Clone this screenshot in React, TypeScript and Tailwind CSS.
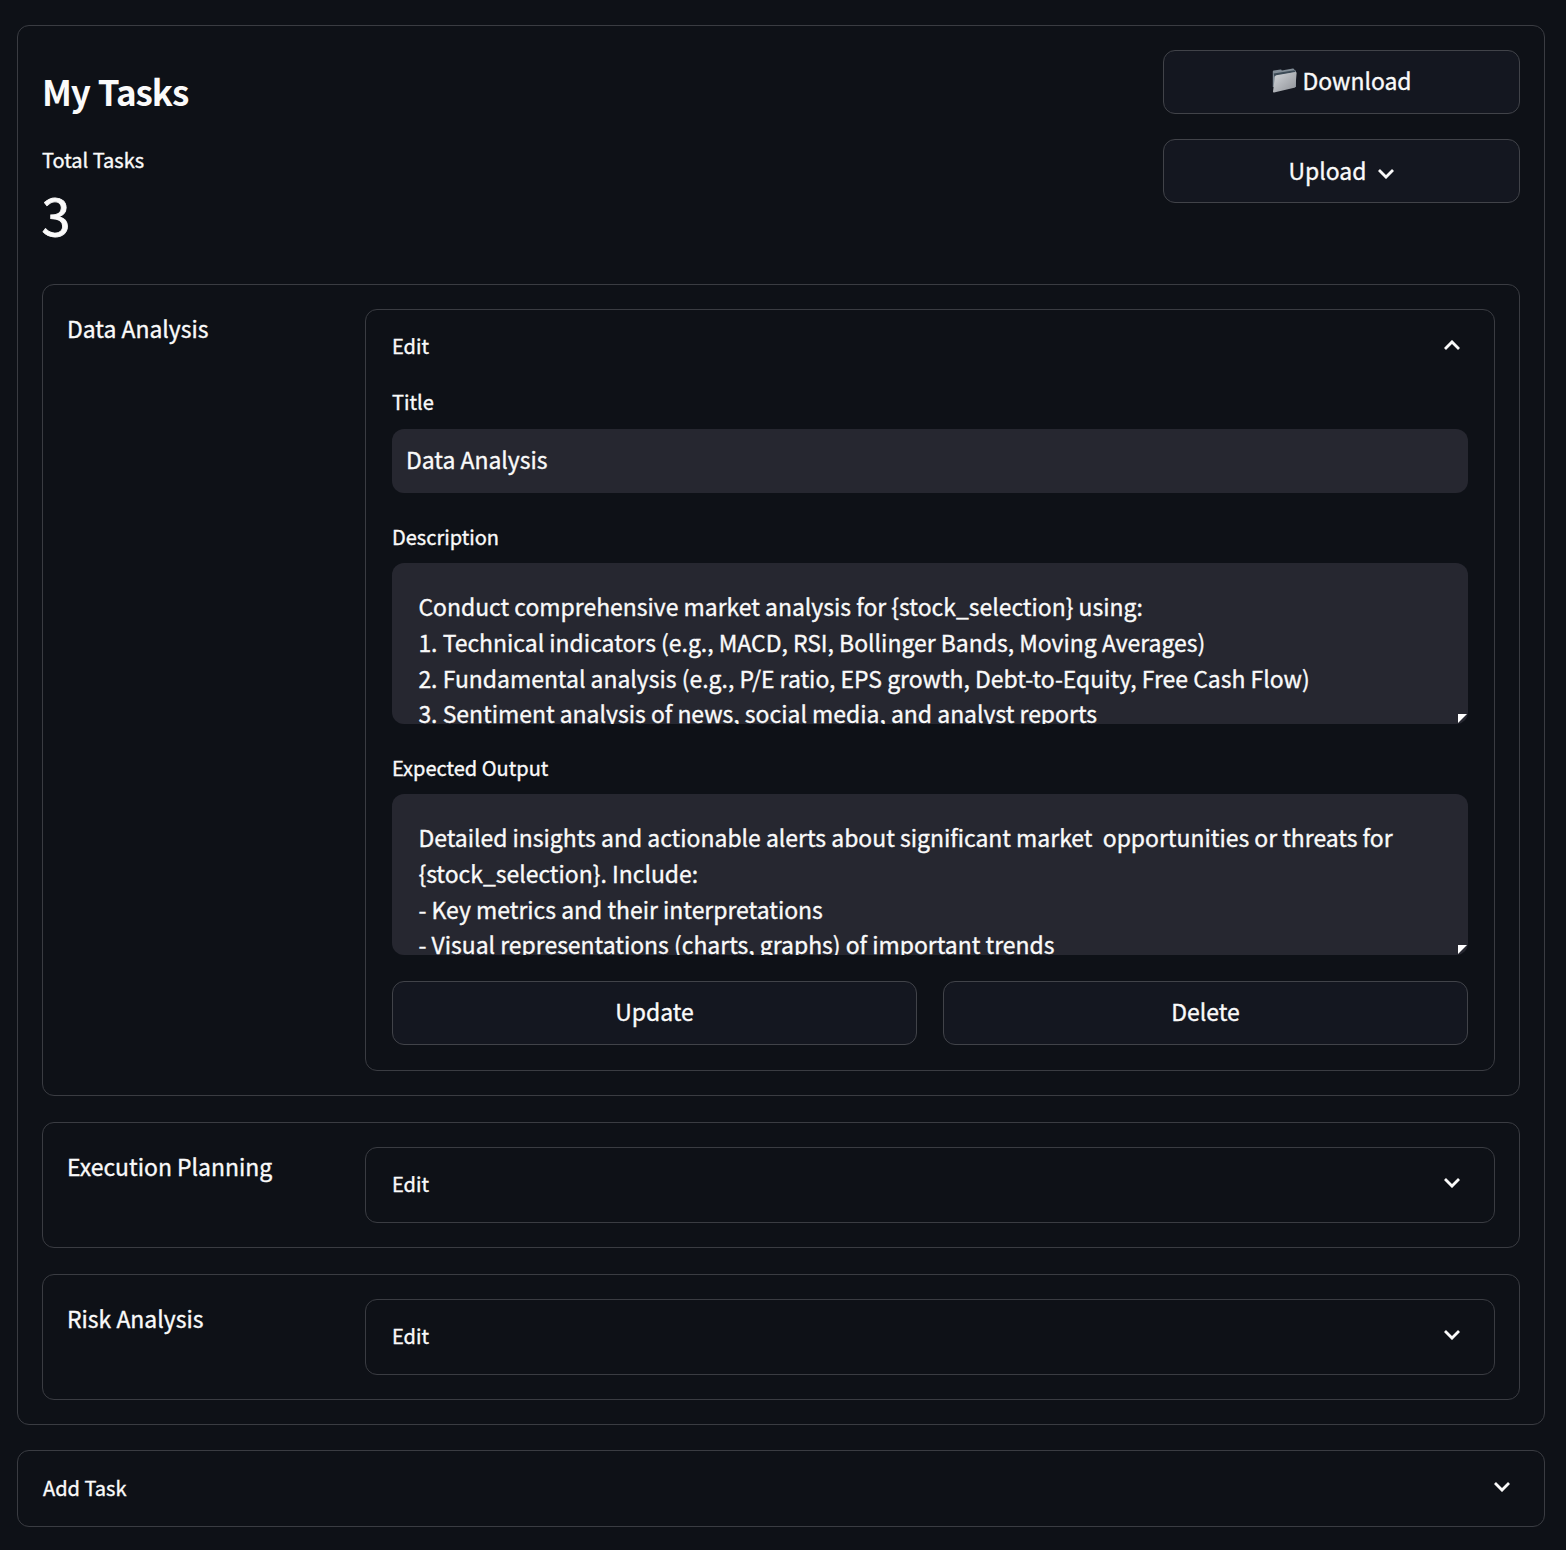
import React from "react";

const F = "font-['Noto_Sans_CJK_SC',sans-serif] [-webkit-text-stroke:0.35px_#fafafa]";
const T = "block h-[35.8px] leading-[35.8px] whitespace-pre";
const btn = "flex h-16 items-center justify-center rounded-xl border border-[#414349] bg-[#141720] text-[22.95px]";

function Chevron({ up = false, className = "" }: { up?: boolean; className?: string }) {
  return (
    <svg viewBox="0 0 16 10" className={`h-[10px] w-4 shrink-0 ${className}`} fill="none" stroke="#fafafa" strokeWidth="2.8">
      <path d={up ? "M1 8.9 8 1.9 15 8.9" : "M1 1.1 8 8.1 15 1.1"} />
    </svg>
  );
}

function Folder() {
  return (
    <svg viewBox="0 0 25 25" className="mr-[5px] ml-px h-[25px] w-[25px] shrink-0">
      <defs>
        <linearGradient id="front" x1="0" y1="0" x2="1" y2="1">
          <stop offset="0" stopColor="#d3d6da" />
          <stop offset="1" stopColor="#8d9096" />
        </linearGradient>
      </defs>
      <path d="M.8 3.6Q.8 2.8 1.8 2.6L8.6 1.5Q9.6 1.4 9.8 2.4L20.8.6Q22 .5 22.2 1.6L24 3V19H.8Z" fill="#818c96" />
      <path d="M1.6 5.6 22.4 2.2 23.4 4 2.4 8.4Z" fill="#3c4a56" />
      <path d="M3 8.6Q3.2 7.5 4.3 7.3L23.4 4Q24.7 3.8 24.6 5L23.5 18.4Q23.4 19.5 22.3 19.8L2 24.4Q.9 24.5 1 23.4Z" fill="url(#front)" />
    </svg>
  );
}

function Area({ lines }: { lines: string[] }) {
  return (
    <div className="relative h-[161px] overflow-hidden rounded-xl bg-[#262730] pt-[26px] pl-[26.4px] text-[22.95px]">
      {lines.map((l) => (
        <span key={l} className={T}>{l}</span>
      ))}
      <svg viewBox="0 0 9 9" className="absolute right-[1px] bottom-[1px] h-[9px] w-[9px]">
        <path d="M0 0H9L0 9Z" fill="#fff" />
      </svg>
    </div>
  );
}

function Label({ children }: { children: string }) {
  return <div className="h-[26px] text-[20px] leading-[24px]">{children}</div>;
}

function Closed({ name }: { name: string }) {
  return (
    <section className="mt-[26px] flex h-[126px] rounded-xl border border-[#3a3c42] p-6">
      <h3 className="w-[298px] pt-px text-[22.95px] leading-[36px]">{name}</h3>
      <div className="flex h-[76px] flex-1 items-center justify-between rounded-xl border border-[#3a3c42] pr-[34px] pb-[3px] pl-[26px] text-[20px]">
        <span>Edit</span>
        <Chevron className="mb-px" />
      </div>
    </section>
  );
}

export default function App() {
  return (
    <main className={`${F} h-[1550px] w-[1566px] overflow-hidden bg-[#0e1117] pt-[25px] pl-[17px] text-[#fafafa]`}>
      <div className="h-[1400px] w-[1528px] rounded-xl border border-[#3a3c42] p-6">
        <header className="flex h-[234px] justify-between">
          <div>
            <h1 className="mt-[19px] text-[35px] leading-[44px] font-bold tracking-[-1.05px] [word-spacing:1px] [-webkit-text-stroke:0px]">My Tasks</h1>
            <div className="mt-[35px] text-[20px] leading-[24px]">Total Tasks</div>
            <div className="-ml-[0.5px] mt-[10px] text-[52px] leading-[64px] [-webkit-text-stroke:0.8px_#fafafa]">3</div>
          </div>
          <div className="w-[357px]">
            <div className={`${btn} pb-[3px]`}>
              <Folder />
              <span>Download</span>
            </div>
            <div className={`${btn} mt-[25px] pb-px`}>
              <span>Upload</span>
              <Chevron className="ml-3 mt-[6px]" />
            </div>
          </div>
        </header>
        <section className="flex h-[812px] rounded-xl border border-[#3a3c42] p-6">
          <h3 className="w-[298px] pt-px text-[22.95px] leading-[36px]">Data Analysis</h3>
          <div className="h-[762px] flex-1 rounded-xl border border-[#3a3c42] px-[26px]">
            <div className="flex h-[74px] items-center justify-between pr-2 pb-[3px] text-[20px]">
              <span>Edit</span>
              <Chevron up className="mb-[2px]" />
            </div>
            <div className="mt-[6px]"><Label>Title</Label></div>
            <div className="mt-[13px] flex h-16 items-center rounded-xl bg-[#262730] pb-[3px] pl-[14px] text-[22.95px]">Data Analysis</div>
            <div className="mt-[32px] mb-[12px]"><Label>Description</Label></div>
            <Area lines={["Conduct comprehensive market analysis for {stock_selection} using:", "1. Technical indicators (e.g., MACD, RSI, Bollinger Bands, Moving Averages)", "2. Fundamental analysis (e.g., P/E ratio, EPS growth, Debt-to-Equity, Free Cash Flow)", "3. Sentiment analysis of news, social media, and analyst reports"]} />
            <div className="mt-[32px] mb-[12px]"><Label>Expected Output</Label></div>
            <Area lines={["Detailed insights and actionable alerts about significant market  opportunities or threats for", "{stock_selection}. Include:", "- Key metrics and their interpretations", "- Visual representations (charts, graphs) of important trends"]} />
            <div className="mt-[26px] grid grid-cols-2 gap-[26px]">
              <div className={`${btn} pb-[3px]`}>Update</div>
              <div className={`${btn} pb-[3px]`}>Delete</div>
            </div>
          </div>
        </section>
        <Closed name="Execution Planning" />
        <Closed name="Risk Analysis" />
      </div>
      <div className="mt-[25px] flex h-[77px] w-[1528px] items-center justify-between rounded-xl border border-[#3a3c42] pr-[34px] pb-px pl-[25px] text-[20px]">
        <span>Add Task</span>
        <Chevron className="mb-[2px]" />
      </div>
    </main>
  );
}
